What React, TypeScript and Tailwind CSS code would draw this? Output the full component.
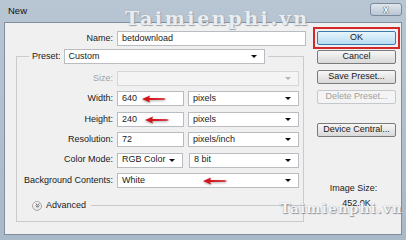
import { ChevronsDown } from 'lucide-react';

function RedArrow({ className }: { className: string }) {
  return (
    <svg className={className} width="24" height="8" viewBox="0 0 24 8">
      <path d="M0 4 L8 0.5 L7.2 3 L22 3.2 L24 4 L22 4.8 L7.2 5 L8 7.5 Z" fill="#d3141a" />
    </svg>
  );
}

function Caret({ disabled }: { disabled?: boolean }) {
  return (
    <span
      className={`ml-auto mr-[7px] h-0 w-0 border-x-[3px] border-t-[3px] border-x-transparent ${
        disabled ? 'border-t-[#b4b4b4]' : 'border-t-[#111]'
      }`}
    />
  );
}

function Select({
  value,
  width,
  disabled,
  children,
}: {
  value?: string;
  width: string;
  disabled?: boolean;
  children?: React.ReactNode;
}) {
  return (
    <div
      className={`relative flex h-[15px] items-center border ${
        disabled ? 'border-[#d6d6d6] bg-[#f4f4f4]' : 'border-[#b9bcc1] bg-white'
      } ${width}`}
    >
      <span className="pl-[4px]">{value}</span>
      <Caret disabled={disabled} />
      {children}
    </div>
  );
}

function Input({ value, width, children }: { value: string; width: string; children?: React.ReactNode }) {
  return (
    <div className={`relative flex h-[15px] items-center border border-[#b9bcc1] bg-white ${width}`}>
      <span className="pl-[4px]">{value}</span>
      {children}
    </div>
  );
}

function Row({ label, muted, children }: { label: string; muted?: boolean; children: React.ReactNode }) {
  return (
    <div className="flex h-[15px] items-center">
      <span className={`w-[100px] pr-[4px] text-right ${muted ? 'text-[#a3a3a3]' : 'text-[#1a1a1a]'}`}>
        {label}
      </span>
      {children}
    </div>
  );
}

function Button({ label, disabled }: { label: string; disabled?: boolean }) {
  return (
    <div
      className={`flex h-[14px] w-[79px] items-center justify-center rounded-[2px] border ${
        disabled
          ? 'border-[#c4c8cc] bg-[#f4f4f4] text-[#a0a0a0]'
          : 'border-[#7a7a7a] bg-gradient-to-b from-[#f6f6f6] to-[#d9d9d9] text-[#1a1a1a]'
      }`}
    >
      {label}
    </div>
  );
}

export default function App() {
  return (
    <div className="relative flex h-[240px] w-[406px] flex-col bg-gradient-to-b from-[#b8c6d4] to-[#aab9c8] font-['Liberation_Sans',Arial,sans-serif] text-[9px] text-[#1a1a1a]">
      <div className="flex h-[22px] justify-between pl-[8px] pr-[4px]">
        <span className="self-center text-[9.5px] text-[#111]">New</span>
        <div className="mt-[3px] flex h-[13px] w-[32px] items-center justify-center rounded-[3px] border border-[#7a8a9c] bg-gradient-to-b from-[#dfe6ee] to-[#b9c6d4] text-[10px] font-bold leading-none text-white [text-shadow:0_0_1px_#333,0_0_1px_#333]">
          x
        </div>
      </div>

      <div className="mx-[4px] mb-[5px] flex flex-1 border border-[#7f8e9f] bg-[#f0f0f0]">
        <div className="w-[301px]">
          <div className="mt-[8px] flex h-[15px] items-center">
            <span className="w-[112px] pr-[4px] text-right">Name:</span>
            <Input value="betdownload" width="w-[189px]" />
          </div>

          <fieldset className="ml-[11px] mt-[3px] w-[288px] border border-[#cbcbcb] pb-[8px]">
            <legend className="ml-[12px] px-[3px]">
              <div className="flex items-center gap-[3px]">
                <span>Preset:</span>
                <Select value="Custom" width="w-[201px]" />
              </div>
            </legend>

            <div className="flex flex-col gap-[5.4px] pt-[7px]">
              <Row label="Size:" muted>
                <Select width="w-[182px]" disabled />
              </Row>
              <Row label="Width:">
                <div className="flex gap-[4px]">
                  <Input value="640" width="w-[67px]">
                    <RedArrow className="absolute left-[24px] top-[3px] drop-shadow-[0_1px_1px_rgba(0,0,0,0.35)]" />
                  </Input>
                  <Select value="pixels" width="w-[111px]" />
                </div>
              </Row>
              <Row label="Height:">
                <div className="flex gap-[4px]">
                  <Input value="240" width="w-[67px]">
                    <RedArrow className="absolute left-[27px] top-[3px] drop-shadow-[0_1px_1px_rgba(0,0,0,0.35)]" />
                  </Input>
                  <Select value="pixels" width="w-[111px]" />
                </div>
              </Row>
              <Row label="Resolution:">
                <div className="flex gap-[4px]">
                  <Input value="72" width="w-[67px]" />
                  <Select value="pixels/inch" width="w-[111px]" />
                </div>
              </Row>
              <Row label="Color Mode:">
                <div className="flex gap-[6px]">
                  <Select value="RGB Color" width="w-[66px]" />
                  <Select value="8 bit" width="w-[110px]" />
                </div>
              </Row>
              <Row label="Background Contents:">
                <Select value="White" width="w-[182px]">
                  <RedArrow className="absolute left-[85px] top-[3px] drop-shadow-[0_1px_1px_rgba(0,0,0,0.35)]" />
                </Select>
              </Row>
            </div>

            <div className="mt-[11px] flex h-[14px] items-center pl-[15px]">
              <span className="flex h-[10px] w-[10px] items-center justify-center rounded-full border border-[#a8a8a8] bg-gradient-to-b from-white to-[#e2e2e2]">
                <ChevronsDown size={7} strokeWidth={3} color="#333" />
              </span>
              <span className="ml-[4px]">Advanced</span>
              <span className="ml-[5px] flex-1 border-t border-[#c8c8c8]" />
            </div>
          </fieldset>
        </div>

        <div className="flex flex-col items-start pl-[7px] pt-[4px]">
          <div className="border-2 border-[#d42828] p-[2px]">
            <div className="flex h-[14px] w-[79px] items-center justify-center rounded-[2px] border border-[#3d7bad] bg-gradient-to-b from-[#e8f5fc] to-[#b6dcf3]">
              OK
            </div>
          </div>
          <div className="ml-[4px] mt-[1px]">
            <Button label="Cancel" />
          </div>
          <div className="ml-[4px] mt-[6px]">
            <Button label="Save Preset..." />
          </div>
          <div className="ml-[4px] mt-[6px]">
            <Button label="Delete Preset..." disabled />
          </div>
          <div className="ml-[4px] mt-[19px]">
            <Button label="Device Central..." />
          </div>
          <div className="ml-[4px] mt-[46px] w-[73px] text-center leading-[10px]">Image Size:</div>
          <div className="ml-[4px] mt-[5px] w-[79px] text-center leading-[10px]">452.0K</div>
        </div>
      </div>

      <span className="pointer-events-none absolute left-[125px] top-[9px] font-['DejaVu_Serif',serif] text-[19px] font-bold leading-none tracking-[2.6px] text-white/80 [text-shadow:0_0_1px_#9aa3ad,1px_1px_1px_#9aa3ad]">
        Taimienphi.vn
      </span>
      <span className="pointer-events-none absolute left-[280px] top-[202px] font-['DejaVu_Serif',serif] text-[13.5px] font-bold leading-none tracking-[1.2px] text-white/90 [text-shadow:0_0_1px_#8a929b,1px_1px_1px_#8a929b]">
        Taimienphi.vn
      </span>
    </div>
  );
}
